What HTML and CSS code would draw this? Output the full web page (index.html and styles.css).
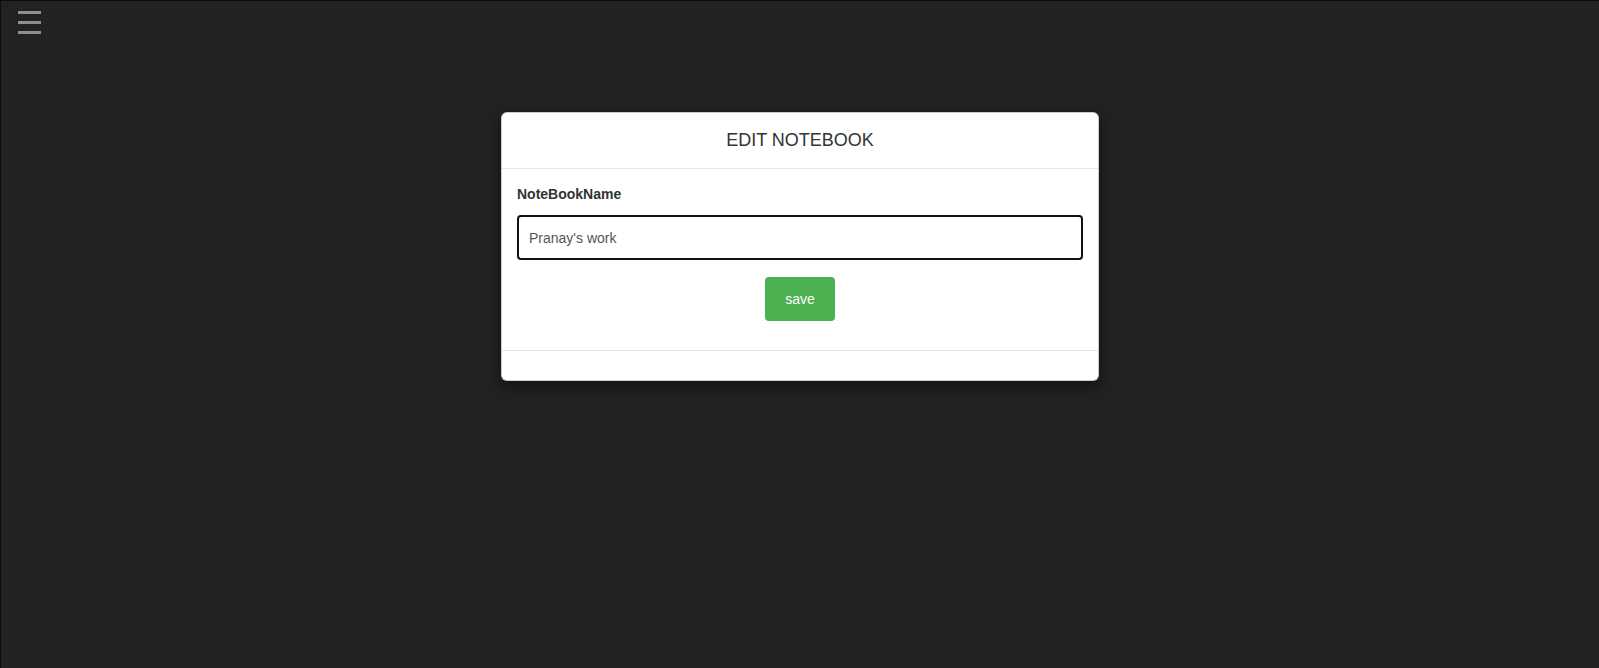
FILE: index.html
```html
<!DOCTYPE html>
<html lang="en">
<head>
<meta charset="utf-8">
<title>Edit Notebook</title>
<link rel="stylesheet" href="styles.css">
</head>
<body>
<div class="page">
  <button class="menu-btn" type="button" aria-label="Menu">
    <svg width="24" height="24" viewBox="0 0 24 24">
      <rect x="0" y="1" width="23" height="3" fill="#8f8f8f"/>
      <rect x="0" y="11" width="23" height="3" fill="#8f8f8f"/>
      <rect x="0" y="21" width="23" height="3" fill="#8f8f8f"/>
    </svg>
  </button>
  <div class="modal">
    <div class="modal-header">
      <h4 class="modal-title">EDIT NOTEBOOK</h4>
    </div>
    <div class="modal-body">
      <label class="field-label" for="nb">NoteBookName</label>
      <input id="nb" class="field-input" type="text" value="Pranay's work">
      <div class="actions">
        <button class="btn-save" type="button">save</button>
      </div>
    </div>
    <div class="modal-footer"></div>
  </div>
</div>
</body>
</html>
```

FILE: styles.css
```css
html, body {
  margin: 0;
  padding: 0;
  background: #222222;
  font-family: "Liberation Sans", Arial, Helvetica, sans-serif;
  font-size: 14px;
  line-height: 20px;
  color: #333333;
}

.page {
  box-sizing: border-box;
  min-height: 100vh;
  border-top: 1px solid #0c0c0c;
  border-left: 1px solid #0c0c0c;
  display: flex;
  flex-direction: column;
}

.menu-btn {
  display: block;
  width: 24px;
  height: 24px;
  margin: 9px 0 0 17px;
  padding: 0;
  border: 0;
  background: transparent;
  line-height: 0;
  align-self: flex-start;
}

.modal {
  width: 598px;
  margin: 78px auto 0;
  background: #ffffff;
  border: 1px solid rgba(0, 0, 0, 0.2);
  border-radius: 6px;
  box-shadow: 0 5px 15px rgba(0, 0, 0, 0.5);
  box-sizing: border-box;
  overflow: hidden;
}

.modal-header {
  padding: 15px 15px;
  border-bottom: 1px solid #e5e5e5;
  text-align: center;
}

.modal-title {
  margin: 0;
  font-size: 18px;
  line-height: 25px;
  font-weight: normal;
  color: #333333;
}

.modal-body {
  padding: 15px 15px 15px;
  display: flex;
  flex-direction: column;
}

.field-label {
  display: block;
  font-weight: bold;
  font-size: 14px;
  line-height: 20px;
  margin-bottom: 11px;
  color: #333333;
}

.field-input {
  box-sizing: border-box;
  width: 100%;
  height: 45px;
  margin: 0;
  padding: 0 10px;
  border: 2px solid #111111;
  border-radius: 4px;
  font-family: inherit;
  font-size: 14px;
  color: #555555;
  background: #ffffff;
  outline: none;
}

.actions {
  display: flex;
  justify-content: center;
  margin-top: 17px;
  margin-bottom: 14px;
}

.btn-save {
  padding: 12px 20px;
  border: 0;
  border-radius: 4px;
  background: #4caf50;
  color: #ffffff;
  font-family: inherit;
  font-size: 14px;
  line-height: 20px;
}

.modal-footer {
  height: 29px;
  border-top: 1px solid #e5e5e5;
}
```
